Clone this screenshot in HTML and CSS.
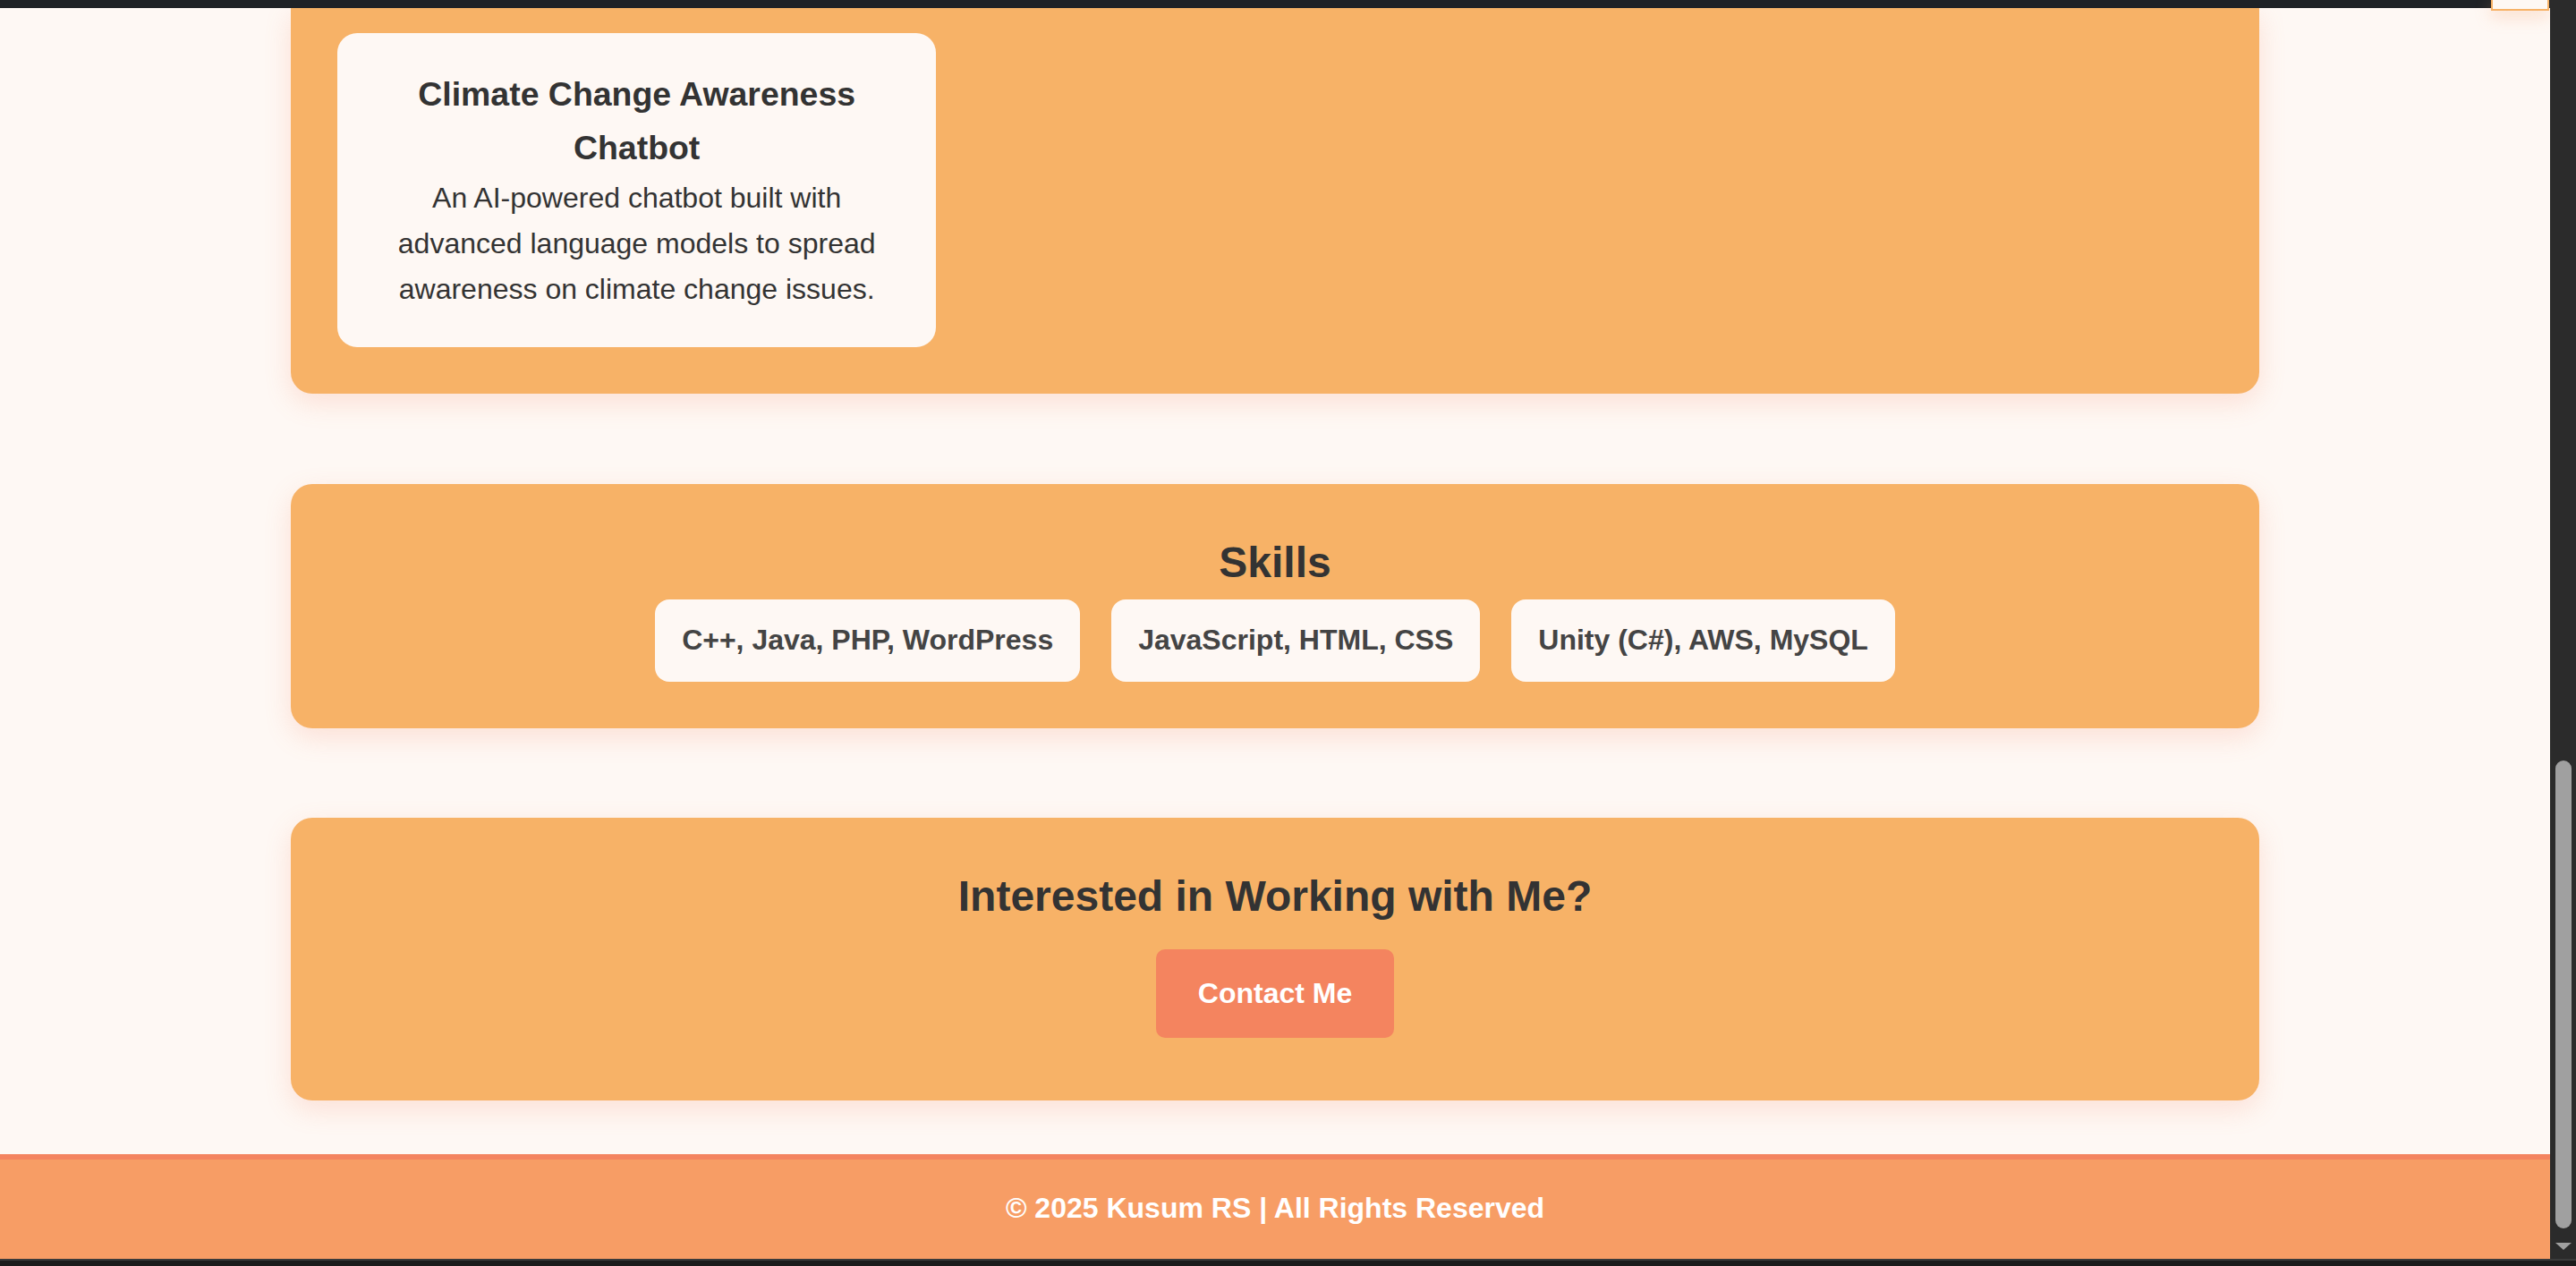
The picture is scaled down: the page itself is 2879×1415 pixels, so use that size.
FILE: index.html
```html
<!DOCTYPE html>
<html lang="en">
<head>
<meta charset="UTF-8">
<title>Kusum RS - Portfolio</title>
<link rel="stylesheet" href="styles.css">
</head>
<body>
<div class="window">
  <div class="viewport">
    <header class="topbar">
      <div class="toggle"></div>
    </header>
    <main class="main">
      <section class="panel panel-projects">
        <div class="project-grid">
          <article class="project-card">
            <h3 class="project-title">Climate Change Awareness Chatbot</h3>
            <p class="project-desc">An AI-powered chatbot built with advanced language models to spread awareness on climate change issues.</p>
          </article>
        </div>
      </section>
      <section class="panel panel-skills">
        <h2 class="panel-heading">Skills</h2>
        <div class="skill-list">
          <div class="skill">C++, Java, PHP, WordPress</div>
          <div class="skill">JavaScript, HTML, CSS</div>
          <div class="skill">Unity (C#), AWS, MySQL</div>
        </div>
      </section>
      <section class="panel panel-cta">
        <h2 class="panel-heading cta-heading">Interested in Working with Me?</h2>
        <div class="cta-actions">
          <a class="btn" href="#contact">Contact Me</a>
        </div>
      </section>
    </main>
    <footer class="footer">
      <p class="footer-text">&copy; 2025 Kusum RS | All Rights Reserved</p>
    </footer>
  </div>
  <div class="scrollbar">
    <div class="scroll-thumb"></div>
    <div class="scroll-arrow"></div>
  </div>
</div>
<div class="taskbar"></div>
</body>
</html>
```

FILE: styles.css
```css
* {
  box-sizing: border-box;
}

html, body {
  margin: 0;
  padding: 0;
}

body {
  width: 2879px;
  height: 1415px;
  overflow: hidden;
  background: #1c1c1c;
  font-family: "Liberation Sans", Arial, sans-serif;
  font-size: 32px;
  line-height: 1.6;
  color: #333333;
}

.window {
  display: flex;
  height: 1407px;
}

.viewport {
  position: relative;
  width: 2850px;
  height: 1407px;
  background: #fef8f4;
  display: flex;
  flex-direction: column;
  overflow: hidden;
}

.topbar {
  position: relative;
  height: 9px;
  flex: none;
  background: #1f2226;
  z-index: 2;
}

.toggle {
  position: absolute;
  top: 0;
  right: 1px;
  width: 65px;
  height: 12px;
  background: #fef8f4;
  border: 2px solid #f7b267;
  border-top: none;
  box-shadow: 0 6px 18px rgba(247, 160, 110, 0.35);
}

.main {
  flex: none;
  display: flex;
  flex-direction: column;
  align-items: center;
  gap: 100px;
  padding-bottom: 60px;
}

.panel {
  width: 2200px;
  background: #f7b267;
  border-radius: 24px;
  padding: 52px;
  box-shadow: 0 10px 30px rgba(244, 132, 95, 0.2);
  text-align: center;
}

.panel-projects {
  border-radius: 0 0 24px 24px;
  padding-top: 28px;
  margin-bottom: 1px;
}

.project-grid {
  display: grid;
  grid-template-columns: repeat(3, 1fr);
  gap: 44px;
}

.project-card {
  background: #fef8f4;
  border-radius: 22px;
  padding: 39px;
  text-align: center;
}

.project-title {
  margin: 0;
  font-size: 37.44px;
  line-height: 1.6;
  font-weight: 700;
  color: #333333;
}

.project-desc {
  margin: 0;
  font-size: 32px;
  line-height: 1.6;
  color: #333333;
}

.panel-heading {
  margin: 0 0 5px;
  font-size: 48px;
  line-height: 72px;
  font-weight: 700;
  color: #333333;
}

.skill-list {
  display: flex;
  justify-content: center;
  gap: 35px;
}

.skill {
  background: #fef8f4;
  border-radius: 16px;
  padding: 20px 30px;
  font-weight: 700;
  font-size: 32px;
  line-height: 1.6;
  color: #444444;
}

.cta-heading {
  margin-bottom: 23px;
}

.cta-actions {
  padding-bottom: 18px;
}

.btn {
  display: inline-block;
  background: #f4845f;
  color: #ffffff;
  text-decoration: none;
  font-weight: 700;
  font-size: 32px;
  line-height: 1.6;
  padding: 24px 47px;
  border-radius: 10px;
}

.footer {
  flex: none;
  background: #f79d65;
  border-top: 6px solid #f4845f;
  padding: 29px 0 31px;
  text-align: center;
}

.footer-text {
  margin: 0;
  color: #ffffff;
  font-weight: 700;
  font-size: 32px;
  line-height: 1.6;
}

.scrollbar {
  width: 29px;
  height: 1407px;
  background: #2b2b2b;
  display: flex;
  flex-direction: column;
  justify-content: flex-end;
  align-items: center;
  padding-bottom: 10px;
}

.scroll-thumb {
  width: 18px;
  height: 523px;
  background: #a0a0a0;
  border-radius: 9px;
  margin-bottom: 16px;
}

.scroll-arrow {
  width: 0;
  height: 0;
  border-left: 9px solid transparent;
  border-right: 9px solid transparent;
  border-top: 8px solid #a0a0a0;
}

.taskbar {
  height: 8px;
  background: #1b1b1b;
  border-top: 2px solid #3b3b3b;
}
```
